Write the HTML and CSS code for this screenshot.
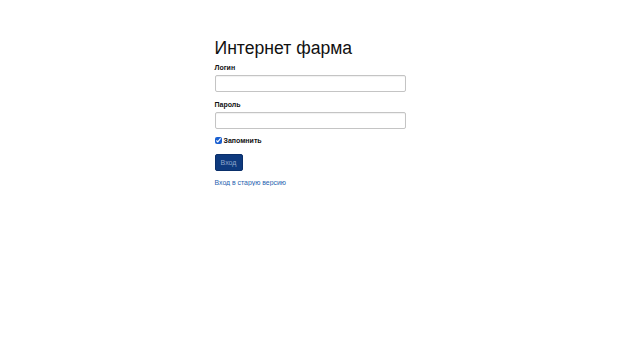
FILE: index.html
```html
<!DOCTYPE html>
<html lang="ru">
<head>
<meta charset="utf-8">
<title>Интернет фарма</title>
<link rel="stylesheet" href="styles.css">
</head>
<body>
<div class="container">
  <h1 class="title">Интернет фарма</h1>
  <form class="form">
    <div class="group">
      <label class="label" for="login">Логин</label>
      <input class="input" id="login" type="text">
    </div>
    <div class="group">
      <label class="label" for="pass">Пароль</label>
      <input class="input" id="pass" type="password">
    </div>
    <label class="check"><input type="checkbox" class="checkbox" checked><span>Запомнить</span></label>
    <button type="button" class="btn">Вход</button>
    <a class="link" href="#">Вход в старую версию</a>
  </form>
</div>
</body>
</html>
```
FILE: styles.css
```css
html, body {
  margin: 0;
  padding: 0;
  background: #fff;
  font-family: "Liberation Sans", Arial, sans-serif;
  color: #111;
}
.container {
  width: 191px;
  margin: 0 auto;
  padding-top: 37px;
}
.title {
  margin: 0 0 4px 0;
  font-size: 17.6px;
  font-weight: normal;
  line-height: 22px;
  color: #111;
}
.form {
  display: flex;
  flex-direction: column;
  align-items: flex-start;
}
.group {
  display: flex;
  flex-direction: column;
  width: 100%;
  margin-bottom: 8px;
}
.label {
  font-size: 7px;
  font-weight: bold;
  line-height: 9px;
  margin-bottom: 3px;
}
.input {
  box-sizing: border-box;
  width: 100%;
  height: 17px;
  margin: 0;
  border: 1px solid #c4c4c4;
  border-radius: 2px;
  box-shadow: inset 0 1px 1px rgba(0,0,0,0.06);
  background: #fff;
}
.check {
  display: flex;
  align-items: center;
  gap: 2px;
  font-size: 7px;
  font-weight: bold;
  margin-top: 0;
}
.checkbox {
  width: 7px;
  height: 7px;
  margin: 0;
  accent-color: #1a5fd0;
}
.btn {
  margin-top: 10px;
  width: 28px;
  height: 17px;
  padding: 0;
  border: 1px solid #0a2f6a;
  border-radius: 2px;
  background: #0e3a7e;
  color: #8fa6cc;
  font-family: "Liberation Sans", Arial, sans-serif;
  font-size: 7px;
}
.link {
  margin-top: 8px;
  font-size: 6.9px;
  color: #1f5faf;
  text-decoration: none;
}
```
